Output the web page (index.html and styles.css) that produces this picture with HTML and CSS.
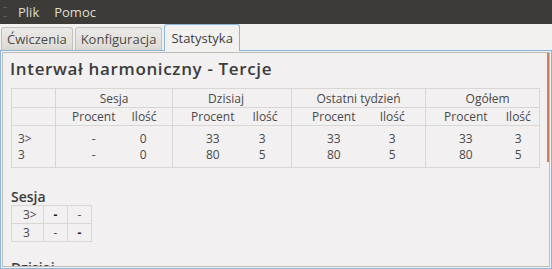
FILE: index.html
```html
<!DOCTYPE html>
<html lang="pl">

<head>
    <meta charset="UTF-8">
    <title>Statystyka</title>
    <link rel="stylesheet" href="styles.css">
</head>

<body>
    <div class="menubar">
        <span class="grip"></span>
        <span class="menu-item">Plik</span>
        <span class="menu-item">Pomoc</span>
    </div>

    <div class="tabs">
        <div class="tab">Ćwiczenia</div>
        <div class="tab">Konfiguracja</div>
        <div class="tab active">Statystyka</div>
    </div>

    <div class="panel">
        <div class="frame">
            <div class="content">
                <h1>Interwał harmoniczny - Tercje</h1>

                <table class="stats">
                    <colgroup>
                        <col style="width:44px">
                        <col style="width:76px"><col style="width:41px">
                        <col style="width:80px"><col style="width:39px">
                        <col style="width:84px"><col style="width:50px">
                        <col style="width:80px"><col style="width:34px">
                    </colgroup>
                    <tr class="head1">
                        <td></td>
                        <td colspan="2" class="g">Sesja</td>
                        <td colspan="2" class="g shift-l">Dzisiaj</td>
                        <td colspan="2" class="g">Ostatni tydzień</td>
                        <td colspan="2" class="g shift-r">Ogółem</td>
                    </tr>
                    <tr class="head2">
                        <td></td>
                        <td class="g">Procent</td><td class="n1">Ilość</td>
                        <td class="g">Procent</td><td class="n2">Ilość</td>
                        <td class="g">Procent</td><td class="n3">Ilość</td>
                        <td class="g">Procent</td><td class="n4">Ilość</td>
                    </tr>
                    <tr class="row first">
                        <td class="label">3&gt;</td>
                        <td class="g">-</td><td class="n1">0</td>
                        <td class="g">33</td><td class="n2">3</td>
                        <td class="g">33</td><td class="n3">3</td>
                        <td class="g">33</td><td class="n4">3</td>
                    </tr>
                    <tr class="row last">
                        <td class="label">3</td>
                        <td class="g">-</td><td class="n1">0</td>
                        <td class="g">80</td><td class="n2">5</td>
                        <td class="g">80</td><td class="n3">5</td>
                        <td class="g">80</td><td class="n4">5</td>
                    </tr>
                </table>

                <h2>Sesja</h2>
                <table class="mini">
                    <tr>
                        <td class="label">3&gt;</td>
                        <td class="dark">-</td>
                        <td>-</td>
                    </tr>
                    <tr>
                        <td class="label">3</td>
                        <td>-</td>
                        <td class="dark">-</td>
                    </tr>
                </table>

                <h2>Dzisiaj</h2>
            </div>
            <div class="scrollbar"></div>
        </div>
    </div>
</body>

</html>
```

FILE: styles.css
```css
body {
    font-family: 'Open Sans', sans-serif;
    font-size: 12px;
    background: #f2f1f0;
    color: #3c3c3c;
    margin: 0;
    width: 552px;
    height: 269px;
    overflow: hidden;
}

.menubar {
    height: 24px;
    background: #3c3b37;
    display: flex;
    align-items: center;
    color: #dfdbd2;
    font-size: 13px;
}

.grip {
    width: 4px;
    height: 8px;
    margin: 0 11px 0 3px;
    border-top: 1px solid #5c5b56;
    border-bottom: 1px solid #5c5b56;
}

.menu-item {
    margin-right: 15px;
}

.tabs {
    height: 26px;
    display: flex;
    align-items: flex-end;
    padding-left: 1px;
    gap: 2px;
    font-size: 13px;
    position: relative;
    z-index: 1;
}

.tab {
    height: 23px;
    padding: 0 5px;
    display: flex;
    align-items: center;
    border: 1px solid #c4c0ba;
    border-bottom: none;
    border-radius: 3px 3px 0 0;
    background: linear-gradient(#ebe9e6, #e3e0dc 70%, #d9d6d1);
    color: #4a4a4a;
    box-sizing: border-box;
}

.tab.active {
    height: 27px;
    margin-bottom: -1px;
    padding: 0 6px;
    background: #f2f1f0;
    border-color: #89b6dc;
    color: #3c3c3c;
}

.panel {
    height: 219px;
    box-sizing: border-box;
    border: 1px solid #89b6dc;
    padding: 1px;
}

.frame {
    height: 100%;
    box-sizing: border-box;
    border: 1px solid #bfbbb5;
    background: #f2f0f0;
    overflow: hidden;
    position: relative;
}

.content {
    padding: 5px 0 0 8px;
}

h1 {
    font-size: 17px;
    letter-spacing: 0.65px;
    font-weight: 600;
    margin: 0 0 8px -1px;
    line-height: 22px;
    color: #3c3c3c;
}

h2 {
    font-size: 14px;
    font-weight: 600;
    margin: 0;
    line-height: 17px;
    color: #3c3c3c;
}

.stats {
    border-collapse: collapse;
    table-layout: fixed;
    width: 529px;
    border: 1px solid #d9d7d3;
    color: #4a4a4a;
    margin-bottom: 20px;
}

.stats td {
    padding: 0;
    text-align: center;
    white-space: nowrap;
}

.stats .g {
    border-left: 1px solid #d9d7d3;
}

.stats .head1 td {
    height: 18px;
    border-bottom: 1px solid #d9d7d3;
}

.stats .head2 td {
    height: 17px;
    border-bottom: 1px solid #d9d7d3;
}

.stats .row td {
    height: 16px;
    line-height: 16px;
}

.stats .first td {
    padding-top: 5px;
}

.stats .last td {
    padding-bottom: 4px;
}

.stats .label {
    text-align: left;
    padding-left: 6px;
}

.stats .shift-l {
    padding-right: 12px;
}

.stats .shift-r {
    padding-left: 10px;
}

.stats .n1 { padding-right: 17px; }
.stats .n2 { padding-right: 19px; }
.stats .n3 { padding-right: 16px; }
.stats .n4 { padding-right: 8px; }

.mini {
    border-collapse: collapse;
    border: 1px solid #d9d7d3;
    color: #4a4a4a;
    margin-bottom: 17px;
}

.mini td {
    width: 23px;
    height: 17px;
    padding: 0;
    text-align: center;
    border: 1px solid #d9d7d3;
}

.mini .label {
    width: 32px;
    text-align: left;
    padding-left: 11px;
    box-sizing: border-box;
}

.mini .dark {
    color: #1a1a1a;
    font-weight: bold;
}

.scrollbar {
    position: absolute;
    top: -1px;
    right: -1px;
    width: 3px;
    height: 110px;
    background: #c8815f;
}
```
